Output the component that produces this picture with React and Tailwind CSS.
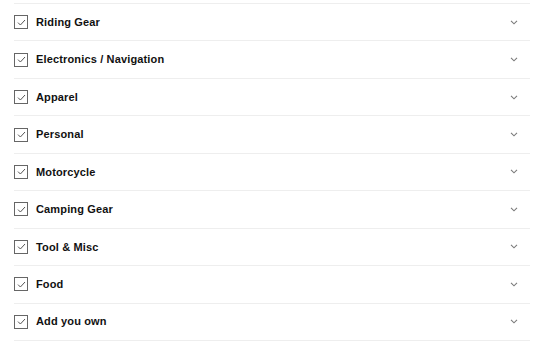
import React from 'react'

const items = [
  'Riding Gear',
  'Electronics / Navigation',
  'Apparel',
  'Personal',
  'Motorcycle',
  'Camping Gear',
  'Tool & Misc',
  'Food',
  'Add you own',
]

function Check() {
  return (
    <span className="flex h-[14px] w-[14px] shrink-0 items-center justify-center border border-[#666666] bg-white">
      <svg width="9" height="7" viewBox="0 0 9 7" fill="none">
        <path d="M1 3.6 L3.4 6 L8 1" stroke="#555" strokeWidth="1" />
      </svg>
    </span>
  )
}

function Chevron() {
  return (
    <svg width="8" height="5" viewBox="0 0 8 5" fill="none">
      <path d="M1 0.8 L4 3.8 L7 0.8" stroke="#7a7a7a" strokeWidth="1.1" />
    </svg>
  )
}

export default function App() {
  return (
    <div className="h-[349px] w-[550px] bg-white pt-[3px]" style={{ fontFamily: '"Liberation Sans", Arial, sans-serif' }}>
      <div className="ml-[14px] w-[516px] border-t border-[#eeeeee]">
        {items.map((name) => (
          <div key={name} className="flex h-[37.45px] items-center border-b border-[#eeeeee]">
            <Check />
            <span className="ml-[8px] flex-1 text-[11px] font-bold tracking-[0.15px] text-[#111111]">{name}</span>
            <span className="mr-[12px] flex items-center">
              <Chevron />
            </span>
          </div>
        ))}
      </div>
    </div>
  )
}
